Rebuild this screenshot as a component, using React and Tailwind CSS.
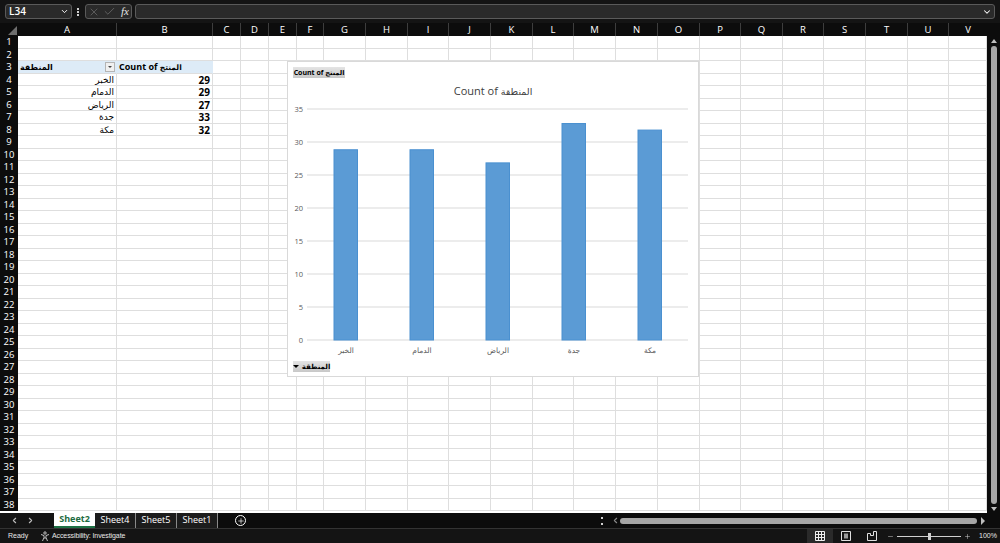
import React from 'react';
import { ChevronDown, X, Check, ChevronLeft, ChevronRight, Plus, Minus } from 'lucide-react';

const colLetters = ['A', 'B', 'C', 'D', 'E', 'F', 'G', 'H', 'I', 'J', 'K', 'L', 'M', 'N', 'O', 'P', 'Q', 'R', 'S', 'T', 'U', 'V'];
const cities = ['الخبر', 'الدمام', 'الرياض', 'جدة', 'مكة'];
const counts = [29, 29, 27, 33, 32];
const rows = Array.from({ length: 38 }, (_, i) => i + 1);

const Cell = ({ children, className = '' }) => (
    <div className={`border-r border-b border-[#dedede] overflow-hidden whitespace-nowrap leading-[12px] text-[9px] font-bold text-black px-[2px] ${className}`}>
        {children}
    </div>
);

const Chart = () => {
    const barX = [334, 410, 486, 562, 638];
    const ticks = [0, 5, 10, 15, 20, 25, 30, 35];
    return (
        <div className="absolute left-[287px] top-[25px] w-[412px] h-[316px] bg-white border border-[#d9d9d9] flex flex-col pt-[5px]">
            <div className="ml-[5px] w-[52px] h-[11px] bg-gradient-to-b from-[#e4e4e4] to-[#c8c8c8] text-[7px] font-bold leading-[11px] text-black text-center whitespace-nowrap">
                Count of <span className="text-[6.5px]">المنتج</span>
            </div>
            <div className="h-[30px] w-full text-center text-[11px] leading-[26px] text-[#404040]">
                Count of <span className="text-[9.5px]">المنطقة</span>
            </div>
            {/* plot coords are page coords, shifted by the viewBox */}
            <svg width="410" height="258" viewBox="288 106 410 258" className="block -mt-[2px] overflow-visible">
                {ticks.map((t) => (
                    <g key={t}>
                        <line x1="307" x2="688" y1={340 - t * 6.6} y2={340 - t * 6.6} stroke="#d9d9d9" strokeWidth="1" />
                        <text x="303" y={342.5 - t * 6.6} fontSize="7.5" fill="#595959" textAnchor="end">{t}</text>
                    </g>
                ))}
                {barX.map((x, i) => (
                    <rect key={x} x={x} y={340 - counts[i] * 6.56} width="23.5" height={counts[i] * 6.56} fill="#5b9bd5" stroke="#4a90d0" strokeWidth="1" />
                ))}
                {barX.map((x, i) => (
                    <text key={x} x={x + 12} y="353" fontSize="7.5" fill="#595959" textAnchor="middle">{cities[i]}</text>
                ))}
            </svg>
            <div className="ml-[5px] w-[37px] h-[11px] -mt-[3px] bg-gradient-to-b from-[#e4e4e4] to-[#c8c8c8] flex items-center justify-center gap-[3px]">
                <span className="w-0 h-0 border-x-[3px] border-x-transparent border-t-[3px] border-t-black" />
                <span className="text-[7px] font-bold leading-[11px] text-black">المنطقة</span>
            </div>
        </div>
    );
};

const Sheet = () => (
    <div className="relative flex-1 bg-white overflow-hidden">
        <div className="grid grid-cols-[18px_99px_96px_28px_28px_28px_27px_42px_42px_41px_42px_42px_41px_42px_42px_42px_41px_42px_41px_42px_42px_41px_38px] auto-rows-[12.5px]">
            {rows.map((r) => (
                <React.Fragment key={r}>
                    <div className="bg-[#0c0c0c] text-white text-[9.5px] leading-[12.5px] text-center">{r}</div>
                    {colLetters.map((c) => {
                        if (r === 3 && c === 'A') {
                            return (
                                <Cell key={c} className="bg-[#ddebf7] flex justify-between items-center !pr-[1px] !border-r-[#ddebf7]">
                                    <span className="text-[8px]">المنطقة</span>
                                    <span className="w-[10px] h-[10px] bg-[#f0f0f0] border border-[#b5b5b5] flex items-center justify-center">
                                        <span className="w-0 h-0 border-x-[2px] border-x-transparent border-t-[2px] border-t-[#444]" />
                                    </span>
                                </Cell>
                            );
                        }
                        if (r === 3 && c === 'B') {
                            return (
                                <Cell key={c} className="bg-[#ddebf7] !border-r-[#ddebf7] text-[8.5px]">
                                    Count of <span className="text-[7.5px]">المنتج</span>
                                </Cell>
                            );
                        }
                        if (r >= 4 && r <= 8 && c === 'A') {
                            return <Cell key={c} className="text-right font-normal">{cities[r - 4]}</Cell>;
                        }
                        if (r >= 4 && r <= 8 && c === 'B') {
                            return <Cell key={c} className="text-right text-[10px]">{counts[r - 4]}</Cell>;
                        }
                        return <Cell key={c} />;
                    })}
                </React.Fragment>
            ))}
        </div>
        <Chart />
    </div>
);

export default function App() {
    return (
        <div className="w-[1000px] h-[543px] overflow-hidden flex flex-col bg-[#0c0c0c] text-white font-['Open_Sans','DejaVu_Sans',sans-serif]">
            {/* formula bar */}
            <div className="h-[23px] bg-[#141414] flex items-center pl-[5px] pr-[5px]">
                <div className="w-[67px] h-[15px] rounded-[3px] border border-[#5a5a5a] bg-[#2a2a2a] flex items-center justify-between pl-[3px] pr-[2px]">
                    <span className="text-[10px] font-semibold">L34</span>
                    <ChevronDown size={9} strokeWidth={2.5} />
                </div>
                <div className="w-[2px] h-[8px] ml-[5px] mr-[6px] border-y-2 border-[#cfcfcf] flex items-center">
                    <div className="w-[2px] h-[2px] bg-[#cfcfcf]" />
                </div>
                <div className="w-[47px] h-[15px] rounded-[3px] border border-[#5a5a5a] bg-[#2a2a2a] flex items-center pl-[2px]">
                    <X size={12} strokeWidth={1} className="text-[#8a8a8a]" />
                    <Check size={13} strokeWidth={1} className="ml-[3px] text-[#8a8a8a]" />
                    <span className="ml-[5px] text-[11px] italic font-['Liberation_Serif',serif] text-[#e8e8e8]">fx</span>
                </div>
                <div className="ml-[3px] flex-1 h-[15px] rounded-[3px] border border-[#5a5a5a] bg-[#2a2a2a] flex items-center justify-end pr-[2px]">
                    <ChevronDown size={10} strokeWidth={2.5} />
                </div>
            </div>

            {/* column letters */}
            <div className="h-[13px] flex">
                <div className="w-[18px] bg-[#0c0c0c] flex items-end justify-end pr-[1px] pb-[1px]">
                    <div className="w-0 h-0 border-l-[9px] border-l-transparent border-b-[9px] border-b-[#6e6e6e]" />
                </div>
                <div className="grid grid-cols-[99px_96px_28px_28px_28px_27px_42px_42px_41px_42px_42px_41px_42px_42px_42px_41px_42px_41px_42px_42px_41px_38px]">
                    {colLetters.map((c) => (
                        <div key={c} className="text-center text-[9.5px] leading-[13px] border-r border-[#3d3d3d] last:border-r-0">{c}</div>
                    ))}
                </div>
            </div>

            <div className="h-[477px] flex">
                <Sheet />
                {/* vertical scrollbar */}
                <div className="w-[13px] flex flex-col items-center bg-[#0c0c0c] pt-[3px] pb-[2px]">
                    <div className="w-0 h-0 border-x-[3px] border-x-transparent border-b-[4px] border-b-[#bdbdbd]" />
                    <div className="w-[6px] flex-1 my-[3px] rounded-full bg-[#a6a6a6]" />
                    <div className="w-0 h-0 border-x-[3px] border-x-transparent border-t-[4px] border-t-[#bdbdbd]" />
                </div>
            </div>

            {/* sheet tabs */}
            <div className="h-[15px] flex items-center bg-[#0c0c0c]">
                <div className="w-[54px] h-full bg-[#141414] flex items-center pl-[10px] gap-[7px] text-[#bdbdbd]">
                    <ChevronLeft size={9} strokeWidth={3} />
                    <ChevronRight size={9} strokeWidth={3} />
                </div>
                <div className="w-[41px] h-full bg-white border-b-2 border-[#1d7044] text-[#1d6b41] text-[9px] font-bold text-center leading-[12px]">Sheet2</div>
                <div className="w-[41px] h-full bg-[#1c1c1c] text-[9px] text-center leading-[13px] border-r border-[#8a8a8a]">Sheet4</div>
                <div className="w-[41px] h-full bg-[#1c1c1c] text-[9px] text-center leading-[13px] border-r border-[#8a8a8a]">Sheet5</div>
                <div className="w-[41px] h-full bg-[#1c1c1c] text-[9px] text-center leading-[13px] border-r border-[#8a8a8a]">Sheet1</div>
                <div className="w-[28px] h-full flex items-center justify-end">
                    <span className="w-[11px] h-[11px] rounded-full border border-white flex items-center justify-center">
                        <Plus size={8} strokeWidth={2} />
                    </span>
                </div>
                <div className="ml-[355px] w-[2px] h-[8px] border-y-2 border-[#cfcfcf]" />
                <ChevronLeft size={9} strokeWidth={3} className="ml-[8px] text-[#8a8a8a]" />
                <div className="w-[357px] h-[6px] rounded-full bg-[#a6a6a6]" />
                <div className="ml-[4px] w-0 h-0 border-y-[4px] border-y-transparent border-l-[4px] border-l-[#bdbdbd]" />
            </div>

            {/* status bar */}
            <div className="h-[15px] bg-[#141414] border-t border-[#333] flex items-center text-[7px] text-[#e8e8e8] font-['Liberation_Sans',sans-serif]">
                <span className="ml-[8px] w-[18px]">Ready</span>
                <svg width="11" height="11" viewBox="0 0 11 11" className="ml-[14px]" fill="none" stroke="#e8e8e8" strokeWidth="0.8">
                    <circle cx="5" cy="2" r="1.2" />
                    <path d="M1 3.5l3 1v2L2.5 10M9 3.5l-3 1v2l1.5 3.5M4 7h2" />
                </svg>
                <span className="ml-[1px] tracking-[-0.1px]">Accessibility: Investigate</span>
                <div className="ml-auto w-[26px] h-full bg-[#2a2a2a] flex items-center justify-center">
                    <svg width="10" height="10" viewBox="0 0 10 10" fill="none" stroke="#f0f0f0" strokeWidth="1">
                        <path d="M.5.5h9v9h-9zM.5 3.5h9M.5 6.5h9M3.5.5v9M6.5.5v9" />
                    </svg>
                </div>
                <svg width="10" height="10" viewBox="0 0 10 10" className="ml-[8px]" fill="none" stroke="#e0e0e0" strokeWidth="1">
                    <path d="M.5.5h9v9h-9z" />
                    <rect x="3" y="2.5" width="4" height="5" fill="#9a9a9a" stroke="none" />
                </svg>
                <svg width="10" height="10" viewBox="0 0 10 10" className="ml-[16px]" fill="none" stroke="#e0e0e0" strokeWidth="1">
                    <path d="M.5 2.5v7h9V.5H6.5v4h-3v-2z" />
                </svg>
                <Minus size={7} strokeWidth={1.5} className="ml-[10px]" />
                <div className="ml-[3px] w-[64px] h-[1px] bg-[#cfcfcf] relative">
                    <div className="absolute left-[31px] -top-[3px] w-[3px] h-[7px] bg-[#cfcfcf]" />
                </div>
                <Plus size={7} strokeWidth={1.5} className="ml-[3px]" />
                <span className="ml-[8px] mr-[5px] w-[16px] text-right">100%</span>
            </div>
        </div>
    );
}
